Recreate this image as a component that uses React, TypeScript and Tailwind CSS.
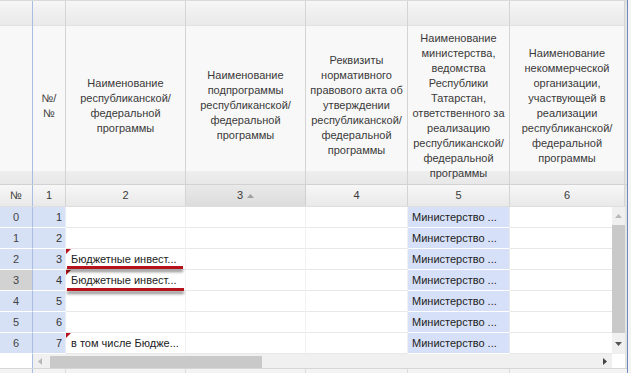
import React from "react";

type HCol = { w: string; lines: string[]; border: string };

const headerCols: HCol[] = [
  { w: "w-[33px]", lines: [], border: "border-[#a9bde3]" },
  { w: "w-[33px]", lines: ["№/", "№"], border: "border-[#d4d4d4]" },
  { w: "w-[120px]", lines: ["Наименование", "республиканской/", "федеральной", "программы"], border: "border-[#d4d4d4]" },
  { w: "w-[120px]", lines: ["Наименование", "подпрограммы", "республиканской/", "федеральной", "программы"], border: "border-[#d4d4d4]" },
  { w: "w-[102px]", lines: ["Реквизиты", "нормативного", "правового акта об", "утверждении", "республиканской/", "федеральной", "программы"], border: "border-[#d4d4d4]" },
  { w: "w-[102px]", lines: ["Наименование", "министерства,", "ведомства", "Республики", "Татарстан,", "ответственного за", "реализацию", "республиканской/", "федеральной", "программы"], border: "border-[#d4d4d4]" },
  { w: "w-[115px]", lines: ["Наименование", "некоммерческой", "организации,", "участвующей в", "реализации", "республиканской/", "федеральной", "программы"], border: "border-[#d4d4d4]" },
];

const numCols = [
  { w: "w-[33px]", label: "№", border: "border-[#a9bde3]", sorted: false },
  { w: "w-[33px]", label: "1", border: "border-[#d4d4d4]", sorted: false },
  { w: "w-[120px]", label: "2", border: "border-[#d4d4d4]", sorted: false },
  { w: "w-[120px]", label: "3", border: "border-[#cfcfcf]", sorted: true },
  { w: "w-[102px]", label: "4", border: "border-[#d4d4d4]", sorted: false },
  { w: "w-[102px]", label: "5", border: "border-[#d4d4d4]", sorted: false },
  { w: "w-[115px]", label: "6", border: "border-[#d4d4d4]", sorted: false },
];

type Row = { idx: string; num: string; c2: string; flag: boolean; underline: "" | "a" | "b"; selected: boolean };

const rows: Row[] = [
  { idx: "0", num: "1", c2: "", flag: false, underline: "", selected: false },
  { idx: "1", num: "2", c2: "", flag: false, underline: "", selected: false },
  { idx: "2", num: "3", c2: "Бюджетные инвест...", flag: true, underline: "a", selected: false },
  { idx: "3", num: "4", c2: "Бюджетные инвест...", flag: true, underline: "b", selected: true },
  { idx: "4", num: "5", c2: "", flag: false, underline: "", selected: false },
  { idx: "5", num: "6", c2: "", flag: false, underline: "", selected: false },
  { idx: "6", num: "7", c2: "в том числе Бюдже...", flag: true, underline: "", selected: false },
];

function Tri({ dir, color }: { dir: "up" | "down" | "left" | "right"; color: string }) {
  const pts =
    dir === "up" ? "0,4 7,4 3.5,0" : dir === "down" ? "0,0 7,0 3.5,4" : dir === "left" ? "4,0 4,7 0,3.5" : "0,0 0,7 4,3.5";
  const w = dir === "up" || dir === "down" ? 7 : 4;
  const h = dir === "up" || dir === "down" ? 4 : 7;
  return (
    <svg width={w} height={h} viewBox={`0 0 ${w} ${h}`}>
      <polygon points={pts} fill={color} />
    </svg>
  );
}

export default function App() {
  return (
    <div className="w-[631px] h-[373px] overflow-hidden bg-white flex font-['Liberation_Sans',Arial,sans-serif] text-[11px] text-[#333]">
      <div className="w-[627px] flex flex-col">
        {/* Header */}
        <div className="flex h-[184px] border-t border-[#dadada]">
          {headerCols.map((c, i) => (
            <div key={i} className={`${c.w} shrink-0 flex flex-col border-r ${c.border}`}>
              <div className="h-[25px] bg-[linear-gradient(to_bottom,#f6f6f6,#e9e9e9)] border-b border-[#e2e2e2]" />
              <div className="flex-1 flex items-center justify-center text-center leading-[15px] text-[#3a3a3a] bg-[linear-gradient(to_bottom,#f8f8f8_0,#f8f8f8_145px,#eeeeee_145px,#e8e8e8_100%)]">
                <div className="pt-[1px]">
                  {c.lines.map((l, j) => (
                    <div key={j} className="whitespace-nowrap">
                      {l}
                    </div>
                  ))}
                </div>
              </div>
            </div>
          ))}
          <div className="w-[2px] bg-[#e4e4e4]" />
        </div>

        {/* Number row */}
        <div className="flex h-[23px] border-t border-[#d2d2d2] border-b border-b-[#dedede]">
          {numCols.map((c, i) => (
            <div
              key={i}
              className={`${c.w} shrink-0 flex items-center justify-center gap-[4px] border-r ${c.border} text-[#3a3a3a] ${
                c.sorted
                  ? "bg-[linear-gradient(to_bottom,#e9e9e9,#dcdcdc)]"
                  : "bg-[linear-gradient(to_bottom,#f7f7f7,#e9e9e9)]"
              }`}
            >
              <span>{c.label}</span>
              {c.sorted && <Tri dir="up" color="#a0a0a0" />}
            </div>
          ))}
          <div className="w-[2px] bg-[#e4e4e4]" />
        </div>

        {/* Data */}
        <div className="flex">
          <div className="w-[612px] flex flex-col">
            {rows.map((r) => (
              <div key={r.idx} className="flex h-[21px]">
                <div
                  className={`w-[33px] shrink-0 flex items-center justify-center border-r border-[#a9bde3] border-b border-b-white text-[#444] ${
                    r.selected ? "bg-[#d2d2d2]" : "bg-[#d7e1f6]"
                  }`}
                >
                  {r.idx}
                </div>
                <div className="w-[33px] shrink-0 flex items-center justify-end pr-[3px] bg-[#d7e1f6] border-r border-[#e8edf7] border-b border-b-white text-[#333]">
                  {r.num}
                </div>
                <div className="w-[120px] shrink-0 relative flex items-center pl-[5px] bg-white border-r border-[#f1f1f1] border-b border-b-[#e8e8e8] whitespace-nowrap text-[#222]">
                  {r.flag && (
                    <div className="absolute left-0 top-0 w-0 h-0 border-t-[5px] border-t-[#b5121b] border-r-[5px] border-r-transparent" />
                  )}
                  {r.c2}
                  {r.underline === "a" && (
                    <div className="absolute left-[1px] right-[2px] top-[17px] h-[3px] bg-[#b5121b] shadow-[0_3px_3px_rgba(0,0,0,0.45)] z-10" />
                  )}
                  {r.underline === "b" && (
                    <div className="absolute left-[1px] right-[1px] top-[18px] h-[3px] bg-[#b5121b] shadow-[0_3px_3px_rgba(0,0,0,0.45)] z-10" />
                  )}
                </div>
                <div className="w-[120px] shrink-0 bg-white border-r border-[#f1f1f1] border-b border-b-[#e8e8e8]" />
                <div className="w-[102px] shrink-0 bg-white border-r border-[#f1f1f1] border-b border-b-[#e8e8e8]" />
                <div className="w-[102px] shrink-0 flex items-center pl-[4px] bg-[#d6e0f8] border-r border-[#e8e8e8] border-b border-b-white whitespace-nowrap text-[#222]">
                  Министерство ...
                </div>
                <div className="w-[102px] shrink-0 bg-white border-b border-b-[#e8e8e8]" />
              </div>
            ))}
          </div>
          {/* Vertical scrollbar */}
          <div className="w-[13px] h-[147px] bg-[#f0f0f0] flex flex-col">
            <div className="h-[18px] flex items-center justify-center">
              <Tri dir="up" color="#b8b8b8" />
            </div>
            <div className="h-[108px] bg-[#c9c9c9]" />
            <div className="flex-1 flex items-center justify-center">
              <Tri dir="down" color="#555" />
            </div>
          </div>
          <div className="w-[2px] bg-[#e4e4e4]" />
        </div>

        {/* Horizontal scrollbar */}
        <div className="flex h-[14px]">
          <div className="w-[33px] bg-white border-r border-[#a9bde3]" />
          <div className="w-[579px] bg-[#f0f0f0] flex items-center">
            <div className="w-[14px] flex items-center justify-center">
              <Tri dir="left" color="#b8b8b8" />
            </div>
            <div className="ml-[3px] w-[212px] h-[12px] mt-[2px] bg-[#c9c9c9]" />
            <div className="flex-1" />
            <div className="w-[14px] flex items-center justify-center">
              <Tri dir="right" color="#444" />
            </div>
          </div>
          <div className="w-[13px] bg-white" />
          <div className="w-[2px] bg-[#e4e4e4]" />
        </div>

        {/* Footer sliver */}
        <div className="flex h-[5px] border-t border-[#d6d6d6] bg-[#f3f3f3]">
          <div className="w-[33px] border-r border-[#a9bde3]" />
          <div className="w-[33px] border-r border-[#dcdcdc]" />
          <div className="w-[120px] border-r border-[#dcdcdc]" />
          <div className="w-[120px] border-r border-[#dcdcdc]" />
          <div className="w-[102px] border-r border-[#dcdcdc]" />
          <div className="w-[102px] border-r border-[#dcdcdc]" />
          <div className="flex-1" />
        </div>
      </div>
      <div className="w-[1px] bg-[#6f88bd]" />
      <div className="w-[3px] bg-[#f4f4f4]" />
    </div>
  );
}
